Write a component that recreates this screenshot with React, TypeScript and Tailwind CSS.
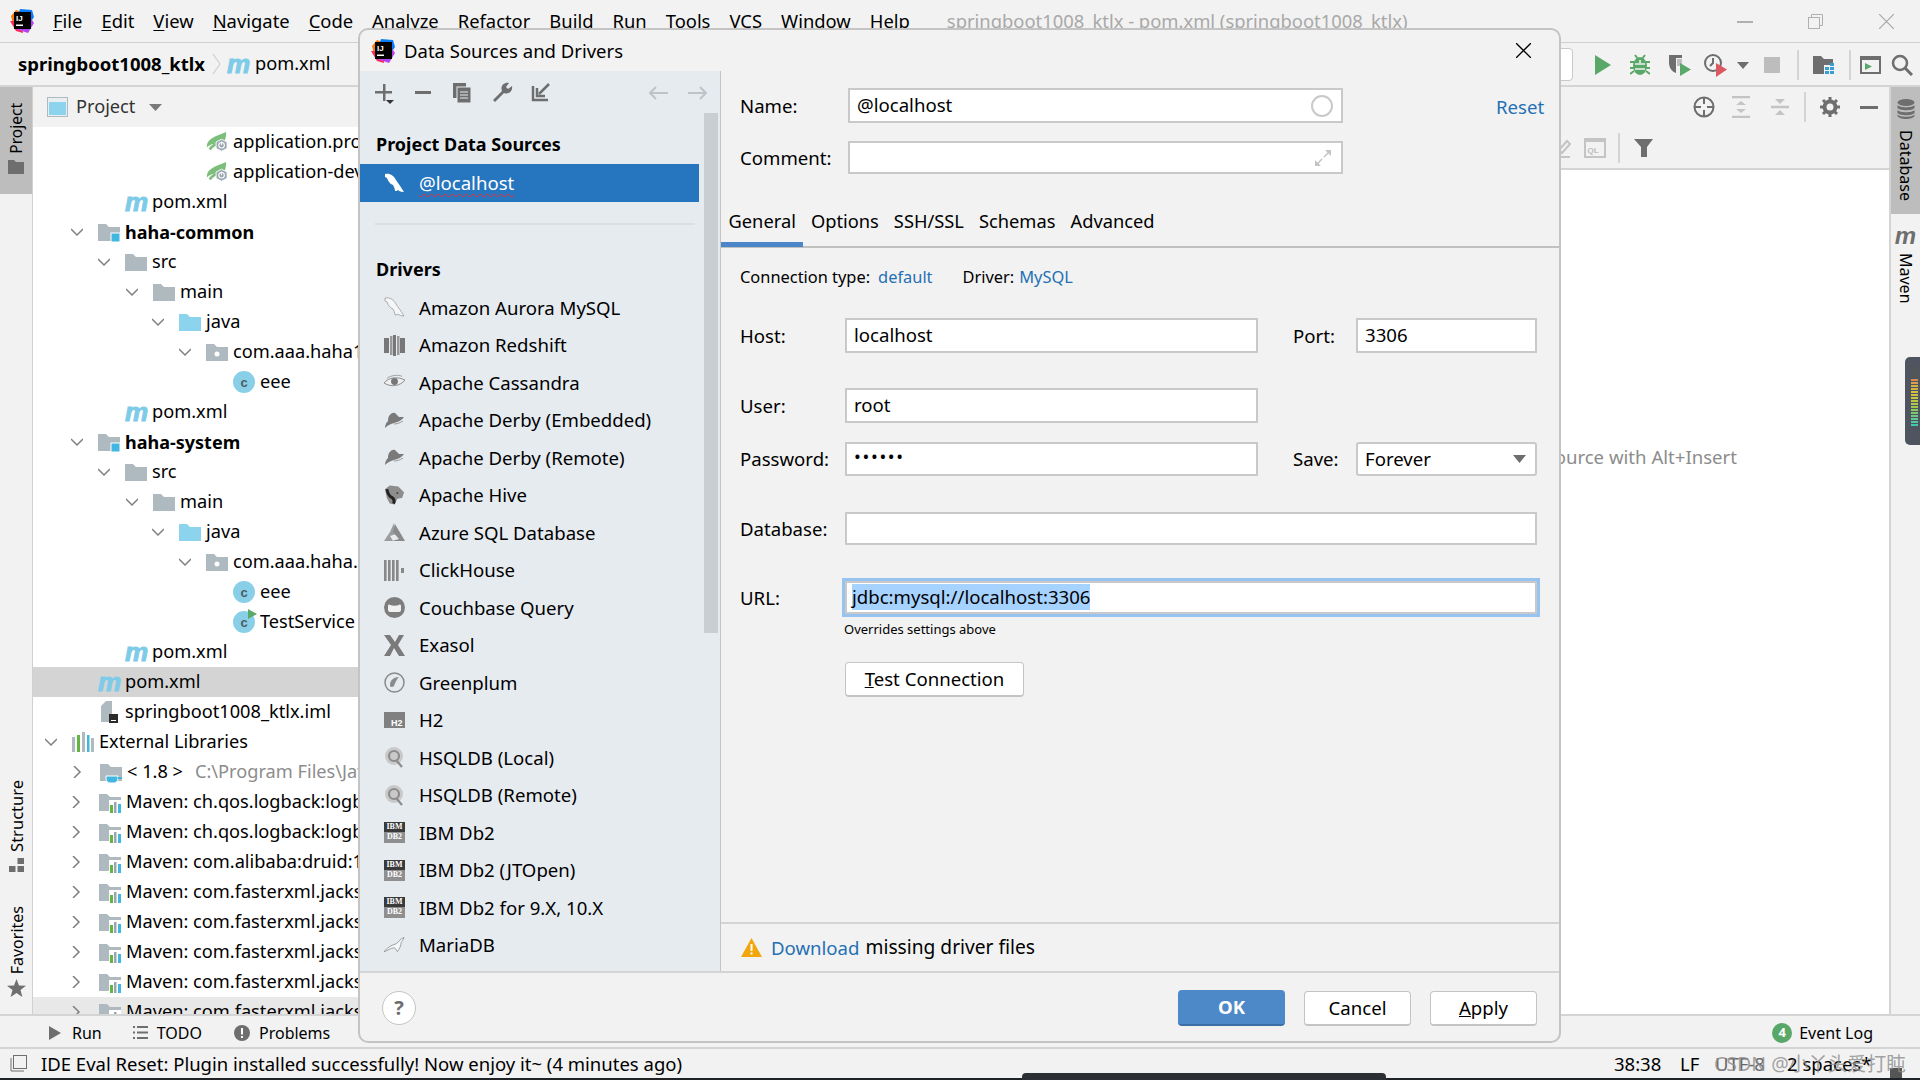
import type { ReactNode } from "react";

const FONT = "font-['Noto_Sans','Open_Sans',sans-serif]";

function IjLogo({ size = 24 }: { size?: number }) {
  return (
    <svg width={size} height={size} viewBox="0 0 24 24">
      <polygon points="1,7 6,1 12,3 12,12 3,15" fill="#f97a12" />
      <polygon points="10,0 22,1 24,8 20,14 8,6" fill="#087cfa" />
      <polygon points="0,12 6,22 13,24 12,12" fill="#fe2857" />
      <polygon points="6,20 18,24 24,14 20,8" fill="#b345f1" />
      <rect x="4" y="3" width="17" height="17" fill="#000" />
      <text x="6" y="11.5" fontSize="8" fontWeight="700" fontFamily="Liberation Sans" fill="#fff">IJ</text>
      <rect x="6" y="15.5" width="7" height="1.5" fill="#fff" />
    </svg>
  );
}

function Folder({ color = "#aeb9c0", children }: { color?: string; children?: ReactNode }) {
  return (
    <svg width="22" height="22" viewBox="0 0 22 22">
      <path d="M0 3h8l3 3h11v14H0z" fill={color} />
      {children}
    </svg>
  );
}

function ModuleFolder() {
  return (
    <Folder>
      <rect x="13" y="12" width="9" height="9" fill="#40b6e0" stroke="#fff" strokeWidth="1" />
    </Folder>
  );
}

function LibFolder() {
  return (
    <Folder>
      <rect x="10" y="9" width="12" height="13" fill="#fff" />
      <rect x="11" y="14" width="3" height="8" fill="#62b543" />
      <rect x="15" y="11" width="2.5" height="11" fill="#9aa7b0" />
      <rect x="19" y="13" width="3" height="9" fill="#40b6e0" />
    </Folder>
  );
}

function JdkFolder() {
  return (
    <Folder>
      <path d="M6 15h12v3c0 2-2 4-4 4H10c-2 0-4-2-4-4z" fill="#40b6e0" stroke="#fff" strokeWidth="1" />
      <rect x="18" y="16" width="4" height="2" fill="#40b6e0" />
    </Folder>
  );
}

function PackageFolder() {
  return (
    <Folder>
      <circle cx="11" cy="13" r="2.5" fill="#fff" />
    </Folder>
  );
}

function Spring() {
  return (
    <svg width="24" height="22" viewBox="0 0 24 22">
      <path d="M1 17C0 8 9 5 22 0c0 6-1 10-4 13H10c-4 0-7 2-9 4z" fill="#7cbf7a" />
      <path d="M4 19c3-4 7-6 10-6" stroke="#7cbf7a" strokeWidth="3" fill="none" />
      <polygon points="17,8 23,11 23,18 17,21 11,18 11,11" fill="#9aa7b0" stroke="#fff" strokeWidth="1" />
      <circle cx="17" cy="14.5" r="3" fill="none" stroke="#fff" strokeWidth="1.2" />
      <rect x="16.5" y="10.5" width="1" height="4" fill="#fff" />
    </svg>
  );
}

function ClassIcon({ run }: { run?: boolean }) {
  return (
    <div className="relative w-[22px] h-[22px] rounded-full bg-[#89cfe8] flex items-center justify-center">
      <span className="text-[13px] leading-none text-[#465a66] font-['Liberation_Sans',sans-serif] font-bold">c</span>
      {run && (
        <svg width="12" height="12" viewBox="0 0 12 12" className="absolute -right-[3px] -top-[3px]">
          <polygon points="2,1 11,6 2,11" fill="#59a869" />
        </svg>
      )}
    </div>
  );
}

function MavenM({ className = "text-[#7ecbe8]" }: { className?: string }) {
  return (
    <span className={`font-['Liberation_Sans',sans-serif] italic font-bold text-[26px] leading-[22px] w-[22px] h-[22px] inline-flex items-center justify-center tracking-[-1px] [-webkit-text-stroke:1px_currentColor] ${className}`}>m</span>
  );
}

function ImlIcon() {
  return (
    <svg width="22" height="24" viewBox="0 0 22 24">
      <path d="M3 6l5-5h6v21H3z" fill="#aeb9c0" />
      <rect x="11" y="14" width="9" height="9" fill="#2b2b2b" />
      <rect x="13" y="20" width="5" height="1" fill="#fff" />
    </svg>
  );
}

function ExtLibsIcon() {
  return (
    <svg width="22" height="20" viewBox="0 0 22 20">
      <rect x="0" y="5" width="3" height="15" fill="#aeb9c0" />
      <rect x="5" y="3" width="3" height="17" fill="#62b543" />
      <rect x="10" y="0" width="3" height="20" fill="#aeb9c0" />
      <rect x="15" y="3" width="2.5" height="17" fill="#40b6e0" />
      <rect x="19" y="6" width="3" height="14" fill="#aeb9c0" />
    </svg>
  );
}

function Chevron({ dir }: { dir: "down" | "right" }) {
  return (
    <svg width="12" height="12" viewBox="0 0 12 12" className="text-[#7f7f7f]">
      <path d={dir === "down" ? "M0 3l6 6 6-6" : "M1 0l6 6-6 6"} fill="none" stroke="currentColor" strokeWidth="1.5" />
    </svg>
  );
}

type TreeRow = { l: number; chev?: "down" | "right"; icon: ReactNode; text: string; bold?: boolean; sel?: boolean; extra?: string; hover?: boolean };

const mavenLib = (text: string, hover?: boolean): TreeRow => ({ l: 126, chev: "right", icon: <LibFolder />, text, hover });

const TREE: TreeRow[] = [
  { l: 233, icon: <Spring />, text: "application.properties" },
  { l: 233, icon: <Spring />, text: "application-dev.properties" },
  { l: 152, icon: <MavenM />, text: "pom.xml" },
  { l: 125, chev: "down", icon: <ModuleFolder />, text: "haha-common", bold: true },
  { l: 152, chev: "down", icon: <Folder />, text: "src" },
  { l: 180, chev: "down", icon: <Folder />, text: "main" },
  { l: 206, chev: "down", icon: <Folder color="#8cd3ee" />, text: "java" },
  { l: 233, chev: "down", icon: <PackageFolder />, text: "com.aaa.haha1" },
  { l: 260, icon: <ClassIcon />, text: "eee" },
  { l: 152, icon: <MavenM />, text: "pom.xml" },
  { l: 125, chev: "down", icon: <ModuleFolder />, text: "haha-system", bold: true },
  { l: 152, chev: "down", icon: <Folder />, text: "src" },
  { l: 180, chev: "down", icon: <Folder />, text: "main" },
  { l: 206, chev: "down", icon: <Folder color="#8cd3ee" />, text: "java" },
  { l: 233, chev: "down", icon: <PackageFolder />, text: "com.aaa.haha.system" },
  { l: 260, icon: <ClassIcon />, text: "eee" },
  { l: 260, icon: <ClassIcon run />, text: "TestService" },
  { l: 152, icon: <MavenM />, text: "pom.xml" },
  { l: 125, icon: <MavenM />, text: "pom.xml", sel: true },
  { l: 125, icon: <ImlIcon />, text: "springboot1008_ktlx.iml" },
  { l: 99, chev: "down", icon: <ExtLibsIcon />, text: "External Libraries" },
  { l: 127, chev: "right", icon: <JdkFolder />, text: "< 1.8 >", extra: "C:\\Program Files\\Java\\jdk1.8" },
  mavenLib("Maven: ch.qos.logback:logback-classic:1.2"),
  mavenLib("Maven: ch.qos.logback:logback-core:1.2"),
  mavenLib("Maven: com.alibaba:druid:1.2.8"),
  mavenLib("Maven: com.fasterxml.jackson.core:annotations"),
  mavenLib("Maven: com.fasterxml.jackson.core:core"),
  mavenLib("Maven: com.fasterxml.jackson.core:databind"),
  mavenLib("Maven: com.fasterxml.jackson.datatype"),
  mavenLib("Maven: com.fasterxml.jackson.module", true),
];

function Dolphin({ color = "#8f8f8f" }: { color?: string }) {
  return (
    <svg width="21" height="21" viewBox="0 0 21 21">
      <path d="M1 1c5-1 9 2 11 6 2 3 5 7 8 12-3 0-5-1-6-2-1 1-2 1-3 1 0-2-1-4-2-6-3-1-5-4-6-7L1 4z" fill={color} />
    </svg>
  );
}

function DriverIcon({ kind }: { kind: string }) {
  const g = "#777";
  switch (kind) {
    case "aurora":
      return (
        <svg width="21" height="21" viewBox="0 0 21 21">
          <path d="M1 1c5-1 9 2 11 6 2 3 5 7 8 12-3 0-5-1-6-2-1 1-2 1-3 1 0-2-1-4-2-6-3-1-5-4-6-7L1 4z" fill="#f4f6f7" stroke="#9a9a9a" strokeWidth="0.8" />
        </svg>
      );
    case "redshift":
      return (
        <svg width="21" height="21" viewBox="0 0 21 21">
          <rect x="0" y="3" width="5" height="15" fill={g} />
          <rect x="6" y="1" width="2.5" height="19" fill="#999" />
          <rect x="9" y="0" width="3" height="21" fill={g} />
          <rect x="13" y="1" width="2.5" height="19" fill="#999" />
          <rect x="16" y="3" width="5" height="15" fill={g} />
        </svg>
      );
    case "eye":
      return (
        <svg width="22" height="21" viewBox="0 0 22 21">
          <path d="M0 11C5 5 14 4 22 8c-5 6-14 8-22 3z" fill="#eef0f2" stroke="#888" strokeWidth="1" />
          <circle cx="11" cy="9.5" r="3.6" fill={g} />
          <path d="M3 6c5-3 11-4 16-2" stroke="#999" fill="none" />
        </svg>
      );
    case "hat":
      return (
        <svg width="21" height="21" viewBox="0 0 21 21">
          <path d="M4 11C4 6 7 2 11 3l4 4 5 0c-2 3-5 5-10 6-3 1-6 2-9 5 0-3 1-5 3-7z" fill="#7a7a7a" />
          <path d="M10 14c3 0 6-1 9-3" stroke="#9a9a9a" fill="none" />
        </svg>
      );
    case "hive":
      return (
        <svg width="22" height="21" viewBox="0 0 22 21">
          <path d="M1 4l5-4 9 1 6 6-2 6-5 1-3 6-5-1-3-6z" fill="#8d8d8d" />
          <path d="M3 4c1 5 3 8 6 9 2 2 2 4 1 6" stroke="#222" strokeWidth="3" fill="none" />
          <circle cx="14" cy="8" r="1" fill="#333" />
        </svg>
      );
    case "azure":
      return (
        <svg width="21" height="21" viewBox="0 0 21 21">
          <path d="M10 1l-4 9-6 9h9L6 14l6-2z" fill="#9c9c9c" />
          <path d="M11 2l10 17H8l7-2-6-7z" fill="#8a8a8a" />
        </svg>
      );
    case "click":
      return (
        <svg width="21" height="21" viewBox="0 0 21 21">
          {[0, 4, 8, 12].map((x) => (
            <rect key={x} x={x} y="0" width="2.6" height="21" fill="#888" />
          ))}
          <rect x="17" y="8" width="3" height="5" fill="#888" />
        </svg>
      );
    case "couch":
      return (
        <svg width="21" height="21" viewBox="0 0 21 21">
          <circle cx="10.5" cy="10.5" r="10.5" fill="#7d7d7d" />
          <path d="M4 9c0-1 1-2 2-1 3 1 6 1 9 0 1-1 2 0 2 1v4c0 1-1 2-2 2H6c-1 0-2-1-2-2z" fill="#f1f1f1" />
        </svg>
      );
    case "exasol":
      return (
        <svg width="21" height="21" viewBox="0 0 21 21">
          <path d="M0 0h6l5 7 4-7h5l-6 10 7 11h-6l-5-8-4 8H0l7-11z" fill="#7a7a7a" />
        </svg>
      );
    case "green":
      return (
        <svg width="21" height="21" viewBox="0 0 21 21">
          <circle cx="10.5" cy="10.5" r="9.5" fill="none" stroke="#8a8a8a" strokeWidth="1.5" />
          <path d="M6 13c0-5 4-8 9-8-2 2-3 4-5 9-2 2-4 1-4-1z" fill="#8a8a8a" />
        </svg>
      );
    case "h2":
      return (
        <svg width="21" height="16" viewBox="0 0 21 16">
          <rect width="21" height="16" fill="#808080" />
          <text x="7" y="13.5" fontSize="9" fontWeight="700" fontFamily="Liberation Sans" fill="#fff">H2</text>
        </svg>
      );
    case "hsql":
      return (
        <svg width="21" height="21" viewBox="0 0 21 21">
          <circle cx="10" cy="9" r="9" fill="#c9c9c9" />
          <circle cx="10" cy="9" r="5" fill="none" stroke="#8c8c8c" strokeWidth="2.2" />
          <path d="M12 13l6 7" stroke="#8c8c8c" strokeWidth="2.2" />
        </svg>
      );
    case "ibm":
      return (
        <div className="w-[21px] h-[21px] bg-[#3a3a3a] flex flex-col items-center font-['Liberation_Serif',serif] text-white leading-none overflow-hidden">
          <span className="text-[8px] font-bold h-[10px] pt-[1px]">IBM</span>
          <span className="text-[8px] w-full text-center bg-[#8f8f8f] h-[11px] pt-[1px] font-bold">DB2</span>
        </div>
      );
    case "maria":
      return (
        <svg width="22" height="16" viewBox="0 0 22 16">
          <path d="M0 15c3-4 8-7 12-8 3-1 4-5 9-7-1 3-2 4-3 5 0 4-2 7-4 10-1-2-2-4-4-4-3 0-6 3-10 4z" fill="#f6f7f8" stroke="#888" strokeWidth="0.8" />
        </svg>
      );
    default:
      return <Dolphin />;
  }
}

const DRIVERS: [string, string][] = [
  ["aurora", "Amazon Aurora MySQL"],
  ["redshift", "Amazon Redshift"],
  ["eye", "Apache Cassandra"],
  ["hat", "Apache Derby (Embedded)"],
  ["hat", "Apache Derby (Remote)"],
  ["hive", "Apache Hive"],
  ["azure", "Azure SQL Database"],
  ["click", "ClickHouse"],
  ["couch", "Couchbase Query"],
  ["exasol", "Exasol"],
  ["green", "Greenplum"],
  ["h2", "H2"],
  ["hsql", "HSQLDB (Local)"],
  ["hsql", "HSQLDB (Remote)"],
  ["ibm", "IBM Db2"],
  ["ibm", "IBM Db2 (JTOpen)"],
  ["ibm", "IBM Db2 for 9.X, 10.X"],
  ["maria", "MariaDB"],
];

const MENU = ["File", "Edit", "View", "Navigate", "Code", "Analyze", "Refactor", "Build", "Run", "Tools", "VCS", "Window", "Help"];

function Field({ w, h = "h-[35px]", children, className = "" }: { w: string; h?: string; children?: ReactNode; className?: string }) {
  return (
    <div className={`${w} ${h} ${className} shrink-0 bg-white border-2 border-[#c9c9c9] flex items-center pl-[7px] pb-[1px] text-[18.6px] leading-none`}>{children}</div>
  );
}

function WhiteBtn({ w, children }: { w: string; children: ReactNode }) {
  return (
    <div className={`${w} h-[35px] bg-white border border-[#c4c4c4] border-b-2 rounded-[4px] flex items-center justify-center text-[18.6px] text-black`}>{children}</div>
  );
}

function Toolbars() {
  return (
    <div className="absolute left-[1580px] top-[44px] h-[42px] w-[340px] flex items-center">
      <svg width="16" height="20" viewBox="0 0 16 20" className="ml-[15px]"><polygon points="0,0 16,10 0,20" fill="#59a869" /></svg>
      <svg width="20" height="22" viewBox="0 0 20 22" className="ml-[19px]">
        <ellipse cx="10" cy="12" rx="7" ry="9" fill="#59a869" />
        <path d="M5 1l3 4M15 1l-3 4M0 8h4M20 8h-4M0 14h4M20 14h-4M0 20l4-3M20 20l-4-3" stroke="#59a869" strokeWidth="2" />
        <path d="M5 10h10M5 15h10M10 6v3" stroke="#f2f2f2" strokeWidth="1.6" />
      </svg>
      <svg width="24" height="24" viewBox="0 0 24 24" className="ml-[18px]">
        <path d="M1 2h13v3H8v15C3 18 1 14 1 9z" fill="#6e6e6e" />
        <path d="M9 6h5v7H9z" fill="#6e6e6e" opacity="0.4" />
        <polygon points="12,10 23,16.5 12,23" fill="#59a869" />
      </svg>
      <svg width="24" height="24" viewBox="0 0 24 24" className="ml-[11px]">
        <circle cx="10" cy="10" r="8" fill="none" stroke="#6e6e6e" strokeWidth="2" />
        <path d="M10 5v5l-3 3" stroke="#6e6e6e" strokeWidth="2" fill="none" />
        <polygon points="13,10 24,16.5 13,24" fill="#db5860" />
      </svg>
      <svg width="12" height="7" viewBox="0 0 12 7" className="ml-[10px]"><polygon points="0,0 12,0 6,7" fill="#6e6e6e" /></svg>
      <div className="ml-[15px] w-[16px] h-[16px] bg-[#bdbdbd]" />
      <div className="ml-[17px] w-[2px] h-[30px] bg-[#d4d4d4]" />
      <svg width="22" height="20" viewBox="0 0 22 20" className="ml-[14px]">
        <path d="M0 1h8l3 3h9v6h-9v9H0z" fill="#6e6e6e" />
        <path d="M12 12h4v3h-4zM17 12h4v3h-4zM12 16h4v3h-4zM17 16h4v3h-4zM17 8h4v3h-4z" fill="#389fd6" />
      </svg>
      <div className="ml-[14px] w-[2px] h-[30px] bg-[#d4d4d4]" />
      <svg width="21" height="18" viewBox="0 0 21 18" className="ml-[9px]">
        <rect x="1" y="1" width="19" height="16" fill="none" stroke="#6e6e6e" strokeWidth="2" />
        <rect x="1" y="1" width="19" height="3" fill="#6e6e6e" />
        <polygon points="5,7 12,10.5 5,14" fill="#59a869" />
      </svg>
      <svg width="22" height="22" viewBox="0 0 22 22" className="ml-[10px]">
        <circle cx="9" cy="9" r="7" fill="none" stroke="#6e6e6e" strokeWidth="2.5" />
        <path d="M14 14l7 7" stroke="#6e6e6e" strokeWidth="3" />
      </svg>
    </div>
  );
}

export default function App() {
  return (
    <div className={`relative w-[1920px] h-[1080px] overflow-hidden bg-[#f2f2f2] text-black flex flex-col ${FONT}`}>
      {/* title bar */}
      <div className="h-[43px] shrink-0 border-b border-[#d0d0d0] flex items-center pl-[10px] text-[18.4px] relative">
        <IjLogo />
        <div className="flex ml-[19px] gap-[19px]">
          {MENU.map((m) => (
            <span key={m}><u className="decoration-1 underline-offset-2">{m[0]}</u>{m.slice(1)}</span>
          ))}
        </div>
        <span className="ml-[37px] text-[#a8a8a8]">springboot1008_ktlx - pom.xml (springboot1008_ktlx)</span>
        <svg width="16" height="2" viewBox="0 0 16 2" className="absolute left-[1737px] top-[21px]"><rect width="16" height="2" fill="#b0b0b0" /></svg>
        <svg width="15" height="15" viewBox="0 0 15 15" className="absolute left-[1808px] top-[14px]">
          <rect x="0.5" y="3.5" width="11" height="11" fill="none" stroke="#b0b0b0" />
          <path d="M3.5 3V.5h11v11H12" fill="none" stroke="#b0b0b0" />
        </svg>
        <svg width="15" height="15" viewBox="0 0 15 15" className="absolute left-[1879px] top-[14px]">
          <path d="M0 0l15 15M15 0L0 15" stroke="#a8a8a8" strokeWidth="1.2" />
        </svg>
      </div>

      {/* nav bar */}
      <div className="h-[44px] shrink-0 border-b-2 border-[#d4d4d4] flex items-center pl-[18px] text-[18.2px] relative">
        <span className="font-bold text-[18.5px]">springboot1008_ktlx</span>
        <svg width="9" height="22" viewBox="0 0 9 22" className="ml-[7px]"><path d="M1 1l7 10-7 10" fill="none" stroke="#c4c4c4" /></svg>
        <span className="ml-[6px] flex items-center"><MavenM /></span>
        <span className="ml-[6px]">pom.xml</span>
        <div className="absolute left-[1500px] top-[5px] w-[73px] h-[33px] bg-white border border-[#c9c9c9] rounded-[4px]" />
      </div>
      <Toolbars />

      {/* middle */}
      <div className="flex-1 min-h-0 flex">
        <div className="w-[33px] shrink-0 border-r border-[#d0d0d0] flex flex-col text-[16px]">
          <div className="h-[107px] bg-[#bdbdbd] flex flex-col items-center justify-center gap-[6px] pb-[4px]">
            <span className="[writing-mode:vertical-rl] rotate-180 leading-none text-[15.5px] ml-[2px]">Project</span>
            <svg width="16" height="14" viewBox="0 0 16 14"><path d="M0 0h6l2 2h8v12H0z" fill="#6e6e6e" /></svg>
          </div>
          <div className="mt-auto flex flex-col items-center gap-[5px] mb-[34px]">
            <span className="[writing-mode:vertical-rl] rotate-180 leading-none text-[16.5px] ml-[2px]">Structure</span>
            <svg width="15" height="15" viewBox="0 0 15 15">
              <rect x="0" y="9" width="6.5" height="6" fill="#6e6e6e" />
              <rect x="8.5" y="9" width="6.5" height="6" fill="#6e6e6e" />
              <rect x="8.5" y="1" width="6.5" height="6" fill="#6e6e6e" />
            </svg>
          </div>
          <div className="flex flex-col items-center gap-[5px] mb-[17px]">
            <span className="[writing-mode:vertical-rl] rotate-180 leading-none ml-[2px]">Favorites</span>
            <svg width="19" height="18" viewBox="0 0 19 18"><polygon points="9.5,0 12,6.5 19,6.8 13.5,11 15.4,18 9.5,14 3.6,18 5.5,11 0,6.8 7,6.5" fill="#6e6e6e" /></svg>
          </div>
        </div>

        <div className="w-[800px] shrink-0 flex flex-col bg-white overflow-hidden">
          <div className="h-[40px] shrink-0 bg-[#f2f2f2] flex items-center pl-[14px] text-[18.2px] text-[#333]">
            <svg width="21" height="20" viewBox="0 0 21 20">
              <rect x="0.5" y="0.5" width="20" height="19" fill="#e8eef2" stroke="#aeb9c0" />
              <rect x="2" y="5" width="17" height="13" fill="#8cd3ee" />
            </svg>
            <span className="ml-[8px]">Project</span>
            <svg width="13" height="7" viewBox="0 0 13 7" className="ml-[14px]"><polygon points="0,0 13,0 6.5,7" fill="#7a7a7a" /></svg>
          </div>
          <div className="flex-1 min-h-0 overflow-hidden text-[18.2px]">
            {TREE.map((r, i) => (
              <div key={i} className={`h-[30px] flex items-center whitespace-nowrap ${r.sel ? "bg-[#d4d4d4]" : ""} ${r.hover ? "bg-[#e8e8e8]" : ""}`} style={{ paddingLeft: r.l - 33 - 54 }}>
                <span className="w-[12px] shrink-0 flex items-center">{r.chev && <Chevron dir={r.chev} />}</span>
                <span className="w-[22px] ml-[15px] shrink-0 flex items-center justify-center">{r.icon}</span>
                <span className={`ml-[5px] ${r.bold ? "font-bold text-[18px]" : ""}`}>{r.text}</span>
                {r.extra && <span className="ml-[12px] text-[#8c8c8c]">{r.extra}</span>}
              </div>
            ))}
          </div>
        </div>

        <div className="flex-1 min-w-0 flex flex-col bg-white">
          <div className="h-[40px] shrink-0 bg-[#f2f2f2] flex items-center justify-end pr-[6px]">
            <svg width="22" height="22" viewBox="0 0 22 22" className="mr-[17px]">
              <circle cx="11" cy="11" r="9.5" fill="none" stroke="#6e6e6e" strokeWidth="2" />
              <path d="M11 1v7M11 14v7M1 11h7M14 11h7" stroke="#6e6e6e" strokeWidth="2" />
            </svg>
            <svg width="18" height="22" viewBox="0 0 18 22" className="mr-[21px]">
              <path d="M0 1h18M0 21h18" stroke="#c4c4c4" strokeWidth="2.5" />
              <path d="M9 5l5 4H4zM9 17l5-4H4z" fill="#c4c4c4" />
            </svg>
            <svg width="18" height="20" viewBox="0 0 18 20" className="mr-[15px]">
              <path d="M0 10h18" stroke="#c4c4c4" strokeWidth="2.5" />
              <path d="M9 7l5-5H4zM9 13l5 5H4z" fill="#c4c4c4" />
            </svg>
            <div className="w-[2px] h-[30px] bg-[#d4d4d4] mr-[14px]" />
            <svg width="20" height="20" viewBox="0 0 20 20" className="mr-[20px]">
              <circle cx="10" cy="10" r="5.5" fill="none" stroke="#6e6e6e" strokeWidth="4" />
              <path d="M10 0v4M10 16v4M0 10h4M16 10h4M3 3l3 3M14 14l3 3M17 3l-3 3M3 17l3-3" stroke="#6e6e6e" strokeWidth="3" />
            </svg>
            <div className="w-[18px] h-[3px] bg-[#6e6e6e] mr-[5px]" />
          </div>
          <div className="h-[43px] shrink-0 bg-[#f2f2f2] border-b-2 border-[#d4d4d4] flex items-center justify-end pr-[236px]">
            <svg width="14" height="20" viewBox="0 0 14 20" className="mr-[13px]">
              <path d="M2 12l8-9 3 3-8 9zM0 19h13" fill="none" stroke="#c4c4c4" strokeWidth="2" />
            </svg>
            <svg width="22" height="20" viewBox="0 0 22 20" className="mr-[12px]">
              <rect x="1" y="1" width="20" height="18" fill="none" stroke="#c4c4c4" strokeWidth="2" />
              <rect x="1" y="1" width="20" height="3" fill="#c4c4c4" />
              <text x="3.5" y="15" fontSize="8" fontWeight="700" fontFamily="Liberation Sans" fill="#bdbdbd">QL</text>
            </svg>
            <div className="w-[2px] h-[30px] bg-[#d4d4d4] mr-[14px]" />
            <svg width="19" height="18" viewBox="0 0 19 18"><path d="M0 0h19l-6 8v10H7V8z" fill="#6e6e6e" /></svg>
          </div>
          <div className="flex-1 flex justify-end pr-[152px] pt-[273px] text-[18.6px] text-[#8c8c8c] whitespace-nowrap">
            <span>Create a data source with Alt+Insert</span>
          </div>
        </div>

        <div className="w-[31px] shrink-0 border-l-2 border-[#d4d4d4] flex flex-col items-center text-[16px] relative">
          <div className="w-full h-[127px] bg-[#bdbdbd] flex flex-col items-center pt-[12px] gap-[11px]">
            <svg width="18" height="20" viewBox="0 0 18 20">
              <ellipse cx="9" cy="3.5" rx="8.5" ry="3.5" fill="#6e6e6e" />
              <path d="M.5 6c2 3 15 3 17 0v3c-2 3-15 3-17 0zM.5 11c2 3 15 3 17 0v3c-2 3-15 3-17 0zM.5 15.5c2 3 15 3 17 0V17c-2 4-15 4-17 0z" fill="#6e6e6e" />
            </svg>
            <span className="[writing-mode:vertical-rl] leading-none">Database</span>
          </div>
          <div className="mt-[13px] flex flex-col items-center gap-[8px]">
            <span className="font-['Liberation_Sans',sans-serif] italic font-bold text-[24px] leading-[18px] text-[#6e6e6e]">m</span>
            <span className="[writing-mode:vertical-rl] leading-none">Maven</span>
          </div>
          <div className="absolute right-0 top-[270px] w-[15px] h-[88px] rounded-l-[5px] bg-[#4e5560] flex flex-col items-end pr-[2px] pt-[10px] gap-[1px]">
            {["#555", "#555", "#555", "#555", "#d98a4f", "#d9a04f", "#d4b03f", "#d4b03f", "#d0c040", "#d0c040", "#c8c840", "#c0c840", "#b0c850", "#a0c850", "#90c860", "#80c870", "#70c880", "#60c890", "#50c8a0", "#40c8a8"].map((c, i) => (
              <div key={i} className="w-[7px] h-[2px]" style={{ background: c }} />
            ))}
          </div>
        </div>
      </div>

      {/* tool window bar */}
      <div className="h-[33px] shrink-0 border-t-2 border-[#d4d4d4] flex items-center text-[16px] pl-[49px] pt-[2px]">
        <svg width="12" height="14" viewBox="0 0 12 14"><polygon points="0,0 12,7 0,14" fill="#6e6e6e" /></svg>
        <span className="ml-[11px]">Run</span>
        <svg width="15" height="13" viewBox="0 0 15 13" className="ml-[31px]">
          <path d="M0 1h2M4 1h11M0 6.5h2M4 6.5h11M0 12h2M4 12h11" stroke="#6e6e6e" strokeWidth="2" />
        </svg>
        <span className="ml-[9px]">TODO</span>
        <svg width="16" height="16" viewBox="0 0 16 16" className="ml-[32px]">
          <circle cx="8" cy="8" r="8" fill="#6e6e6e" />
          <rect x="7" y="3" width="2" height="6.5" fill="#fff" />
          <rect x="7" y="11" width="2" height="2" fill="#fff" />
        </svg>
        <span className="ml-[9px]">Problems</span>
        <div className="ml-auto mr-[47px] flex items-center">
          <span className="w-[20px] h-[20px] rounded-full bg-[#59a869] text-white text-[13px] font-bold flex items-center justify-center leading-none">4</span>
          <span className="ml-[7px]">Event Log</span>
        </div>
      </div>

      {/* status bar */}
      <div className="h-[31px] shrink-0 border-t-2 border-[#d4d4d4] flex items-center text-[18.5px] pl-[10px] relative whitespace-nowrap">
        <svg width="17" height="17" viewBox="0 0 17 17">
          <rect x="3.5" y="0.5" width="13" height="13" fill="none" stroke="#6e6e6e" />
          <path d="M1 3v13h13" fill="none" stroke="#6e6e6e" />
        </svg>
        <span className="ml-[14px]">IDE Eval Reset: Plugin installed successfully! Now enjoy it~ (4 minutes ago)</span>
        <span className="absolute left-[1614px]">38:38</span>
        <span className="absolute left-[1680px]">LF</span>
        <span className="absolute left-[1715px] text-[#666]">UTF-8</span>
        <span className="absolute left-[1787px]">2 spaces*</span>
        <svg width="12" height="10" viewBox="0 0 12 10" className="absolute left-[1890px] top-[19px]"><rect width="12" height="10" fill="#555" /></svg>
        <span className="absolute left-[1714px] top-[0px] text-[19.5px] text-[#8c8c8c]/80 font-['Noto_Sans','Noto_Sans_CJK_SC',sans-serif]">CSDN @小丫头爱打盹</span>
      </div>
      <div className="h-[2px] shrink-0 bg-[#1f2326]" />
      <div className="absolute left-[1022px] bottom-0 w-[364px] h-[7px] rounded-t-[4px] bg-[#2b2f33]" />

      {/* dialog */}
      <div className="absolute left-[358px] top-[28px] w-[1203px] h-[1015px] rounded-[10px] border-2 border-[#c4c4c4] bg-[#f2f2f2] flex flex-col overflow-hidden">
        <div className="h-[41px] shrink-0 flex items-center pl-[11px] pt-[1px] relative text-[18.5px]">
          <IjLogo />
          <span className="ml-[9px]">Data Sources and Drivers</span>
          <svg width="15" height="15" viewBox="0 0 15 15" className="absolute right-[28px] top-[13px]">
            <path d="M0 0l15 15M15 0L0 15" stroke="#000" strokeWidth="1.3" />
          </svg>
        </div>

        <div className="h-[900px] shrink-0 flex">
          {/* left list */}
          <div className="w-[361px] shrink-0 bg-[#e6ebf0] border-r border-[#c4c4c4] relative">
            <div className="h-[42px] flex items-center relative pt-[1px]">
              <svg width="20" height="22" viewBox="0 0 20 22" className="ml-[15px]">
                <path d="M8 0h2.5v7H17v2.5h-6.5V17H8V9.500H0V7h8z" fill="#6e6e6e" transform="translate(0 2)" />
                <polygon points="11,18 19,18 15,22" fill="#333" />
              </svg>
              <div className="ml-[20px] w-[16px] h-[3px] bg-[#6e6e6e]" />
              <svg width="18" height="20" viewBox="0 0 18 20" className="ml-[22px]">
                <rect x="0" y="0" width="13" height="15" fill="#6e6e6e" />
                <rect x="4" y="4" width="14" height="16" fill="#6e6e6e" stroke="#e6ebf0" />
                <path d="M7 9h8M7 12h8M7 15h8" stroke="#e6ebf0" />
              </svg>
              <svg width="21" height="21" viewBox="0 0 21 21" className="ml-[21px]">
                <path d="M1 18L10 9C8 4 12 0 17 1l-3 4 2 2 4-3c1 5-3 9-8 7l-9 9z" fill="#6e6e6e" />
              </svg>
              <svg width="19" height="19" viewBox="0 0 19 19" className="ml-[18px]">
                <path d="M2 3v14h15" fill="none" stroke="#6e6e6e" strokeWidth="2.5" />
                <path d="M18 1L8 11" stroke="#6e6e6e" strokeWidth="2.5" />
                <path d="M6 5v8h8" fill="none" stroke="#6e6e6e" strokeWidth="2.5" />
              </svg>
              <svg width="20" height="14" viewBox="0 0 20 14" className="absolute left-[288px]">
                <path d="M20 7H2M8 1L2 7l6 6" fill="none" stroke="#bfc3c7" strokeWidth="2" />
              </svg>
              <svg width="20" height="14" viewBox="0 0 20 14" className="absolute left-[328px]">
                <path d="M0 7h18M12 1l6 6-6 6" fill="none" stroke="#bfc3c7" strokeWidth="2" />
              </svg>
            </div>

            <div className="h-[51px] flex items-end pb-[6px] pl-[16px] text-[18px] font-bold">Project Data Sources</div>
            <div className="w-[339px] h-[38px] bg-[#2675bf] flex items-center pl-[24px] text-white text-[18.6px]">
              <Dolphin color="#ffffff" />
              <span className="ml-[14px] underline decoration-wavy decoration-[#e8303a] decoration-1 underline-offset-[3px]">@localhost</span>
            </div>
            <div className="ml-[15px] mt-[21px] w-[320px] h-[2px] bg-[#dcdfe2]" />
            <div className="h-[64px] flex items-end pb-[6px] pl-[16px] text-[18px] font-bold">Drivers</div>
            <div className="grid auto-rows-[37.5px] text-[18.6px]">
              {DRIVERS.map(([kind, name]) => (
                <div key={name} className="flex items-center pl-[24px]">
                  <span className="w-[21px] flex justify-center items-center shrink-0"><DriverIcon kind={kind} /></span>
                  <span className="ml-[14px] whitespace-nowrap">{name}</span>
                </div>
              ))}
            </div>
            <div className="absolute right-[2px] top-[42px] w-[14px] h-[520px] bg-[#c9ced3]" />
          </div>

          {/* right form */}
          <div className="flex-1 flex flex-col min-w-0 text-[18.6px]">
            <div className="pl-[19px] pt-[17px]">
              <div className="flex items-center">
                <span className="w-[108px]">Name:</span>
                <Field w="w-[495px]" className="justify-between pr-[8px]">
                  <span>@localhost</span>
                  <span className="w-[22px] h-[22px] rounded-full border-2 border-[#c9c9c9] mt-[1px]" />
                </Field>
                <span className="ml-[153px] mt-[2px] text-[#2470b3]">Reset</span>
              </div>
              <div className="flex items-center mt-[18px]">
                <span className="w-[108px]">Comment:</span>
                <Field w="w-[495px]" h="h-[33px]" className="justify-end pr-[9px]">
                  <svg width="18" height="18" viewBox="0 0 18 18" className="mt-[1px]">
                    <path d="M10 8l6-6M8 10l-6 6" stroke="#c4c4c4" strokeWidth="1.5" />
                    <path d="M11 1h6v6zM1 11v6h6z" fill="#c4c4c4" />
                  </svg>
                </Field>
              </div>
            </div>

            <div className="mt-[24px] h-[50px] shrink-0 border-b-2 border-[#c0c0c0] flex relative text-[18.3px]">
              {["General", "Options", "SSH/SSL", "Schemas", "Advanced"].map((t, i) => (
                <div key={t} className={`h-[49px] flex items-center px-[7.5px] pt-[1px] border-b-[5px] ${i === 0 ? "border-[#4a86c8]" : "border-transparent"}`}>{t}</div>
              ))}
            </div>

            <div className="flex-1 pl-[19px] min-h-0">
              <div className="mt-[17px] h-[25px] flex items-center text-[16.4px] leading-none">
                <span>Connection type:</span>
                <span className="ml-[8px] text-[#2470b3]">default</span>
                <span className="ml-[30px]">Driver:</span>
                <span className="ml-[5px] text-[#2470b3]">MySQL</span>
              </div>
              <div className="mt-[28px] flex items-center">
                <span className="w-[105px]">Host:</span>
                <Field w="w-[413px]">localhost</Field>
                <span className="ml-[35px] w-[63px]">Port:</span>
                <Field w="w-[181px]">3306</Field>
              </div>
              <div className="mt-[35px] flex items-center">
                <span className="w-[105px]">User:</span>
                <Field w="w-[413px]">root</Field>
              </div>
              <div className="mt-[19px] flex items-center">
                <span className="w-[105px]">Password:</span>
                <Field w="w-[413px]" h="h-[34px]"><span className="text-[18px] tracking-[1.7px] -mt-[5px] leading-none">••••••</span></Field>
                <span className="ml-[35px] w-[63px]">Save:</span>
                <div className="w-[181px] h-[34px] bg-white border-2 border-[#c9c9c9] rounded-[3px] flex items-center justify-between pl-[7px] pr-[9px]">
                  <span>Forever</span>
                  <svg width="13" height="8" viewBox="0 0 13 8"><polygon points="0,0 13,0 6.5,8" fill="#6e6e6e" /></svg>
                </div>
              </div>
              <div className="mt-[36px] flex items-center">
                <span className="w-[105px]">Database:</span>
                <Field w="w-[692px]" h="h-[33px]" />
              </div>
              <div className="mt-[36px] flex items-center">
                <span className="w-[105px]">URL:</span>
                <Field w="w-[692px]" h="h-[33px]" className="ring-[3px] ring-[#97c3f0] border-[#7aaee6] !pl-[5px]">
                  <span className="bg-[#a6d2ff] leading-[26px]">jdbc:mysql://localhost:3306</span>
                </Field>
              </div>
              <div className="ml-[105px] mt-[6px] text-[13px] leading-[18px] -translate-x-[1px]">Overrides settings above</div>
              <div className="ml-[105px] mt-[24px]">
                <WhiteBtn w="w-[179px]"><span><u className="decoration-1">T</u>est Connection</span></WhiteBtn>
              </div>
            </div>

            <div className="h-[49px] shrink-0 border-t-2 border-[#d4d4d4] flex items-center pl-[20px]">
              <svg width="21" height="19" viewBox="0 0 21 19">
                <polygon points="10.5,0 21,19 0,19" fill="#f2a60d" />
                <rect x="9.5" y="6" width="2" height="7" fill="#fff" />
                <rect x="9.5" y="14.5" width="2" height="2" fill="#fff" />
              </svg>
              <span className="ml-[9px] text-[#2470b3]">Download</span>
              <span className="ml-[6px] text-[19.2px]">missing driver files</span>
            </div>
          </div>
        </div>

        {/* footer */}
        <div className="flex-1 border-t-2 border-[#d4d4d4] flex items-center pl-[22px] pr-[22px] pt-[2px] text-[18.6px]">
          <div className="w-[34px] h-[34px] rounded-full bg-white border border-[#c4c4c4] flex items-center justify-center font-bold text-[20px] text-[#6e6e6e]">?</div>
          <div className="ml-auto w-[107px] h-[36px] rounded-[4px] bg-[#4d89c9] border-b-2 border-[#3a6ea5] text-white font-bold flex items-center justify-center">OK</div>
          <div className="ml-[19px]"><WhiteBtn w="w-[107px]">Cancel</WhiteBtn></div>
          <div className="ml-[19px]"><WhiteBtn w="w-[107px]"><span><u className="decoration-1">A</u>pply</span></WhiteBtn></div>
        </div>
      </div>
    </div>
  );
}
